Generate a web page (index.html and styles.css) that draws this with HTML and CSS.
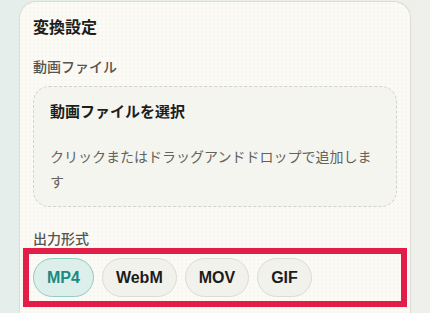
FILE: index.html
```html
<!DOCTYPE html>
<html lang="ja">
<head>
<meta charset="utf-8">
<link rel="stylesheet" href="styles.css">
</head>
<body>
<div class="card">
  <h2 class="card-title">変換設定</h2>
  <div class="section">
    <div class="label">動画ファイル</div>
    <div class="dropzone">
      <div class="drop-title">動画ファイルを選択</div>
      <div class="drop-desc">クリックまたはドラッグアンドドロップで追加します</div>
    </div>
  </div>
  <div class="section section-format">
    <div class="label">出力形式</div>
    <div class="chips">
      <button class="chip chip-active">MP4</button>
      <button class="chip">WebM</button>
      <button class="chip">MOV</button>
      <button class="chip">GIF</button>
    </div>
  </div>
</div>
</body>
</html>
```

FILE: styles.css
```css
html, body {
  margin: 0;
  height: 100%;
}
body {
  padding: 1px 0 0 19px;
  box-sizing: border-box;
  background: linear-gradient(90deg, #e5eeea 0%, #eaeeea 50%, #efefeb 100%);
  font-family: "Noto Sans CJK JP", "Liberation Sans", sans-serif;
  overflow: hidden;
}
.card {
  width: 392px;
  box-sizing: border-box;
  height: 312px;
  border: 1px solid #dcdcd4;
  border-bottom: none;
  border-radius: 17px 17px 0 0;
  background-color: #fbfaf5;
  background-image: radial-gradient(circle, rgba(120, 120, 100, 0.035) 0.7px, transparent 1px);
  background-size: 4px 4px;
  padding: 13px 13px 0;
}
.card-title {
  margin: 0;
  font-size: 16px;
  line-height: 22px;
  font-weight: 700;
  color: #1d1d1b;
}
.section {
  margin-top: 19px;
}
.section-format {
  margin-top: 21px;
}
.label {
  font-size: 14px;
  line-height: 20px;
  font-weight: 500;
  color: #55554f;
  margin-bottom: 10px;
}
.dropzone {
  border: 1px dashed #d3d3cc;
  border-radius: 16px;
  background: #f5f5f0;
  padding: 13px 16px 12px;
}
.drop-title {
  font-size: 15px;
  line-height: 22px;
  font-weight: 700;
  color: #1d1d1b;
}
.drop-desc {
  margin-top: 22px;
  font-size: 14px;
  line-height: 25px;
  color: #62625e;
}
.chips {
  display: flex;
  gap: 8px;
  outline: 6px solid #e11d48;
  outline-offset: 4px;
}
.chip {
  font-family: "Liberation Sans", Arial, sans-serif;
  font-size: 16px;
  line-height: 19px;
  font-weight: 700;
  padding: 9px 13px;
  border: 1px solid #dcdcd5;
  border-radius: 20px;
  background: #f2f2ed;
  color: #1c1c1a;
  margin: 0;
}
.chip-active {
  background: #dcefea;
  border-color: #8fcdc3;
  color: #1b8a80;
}
```
